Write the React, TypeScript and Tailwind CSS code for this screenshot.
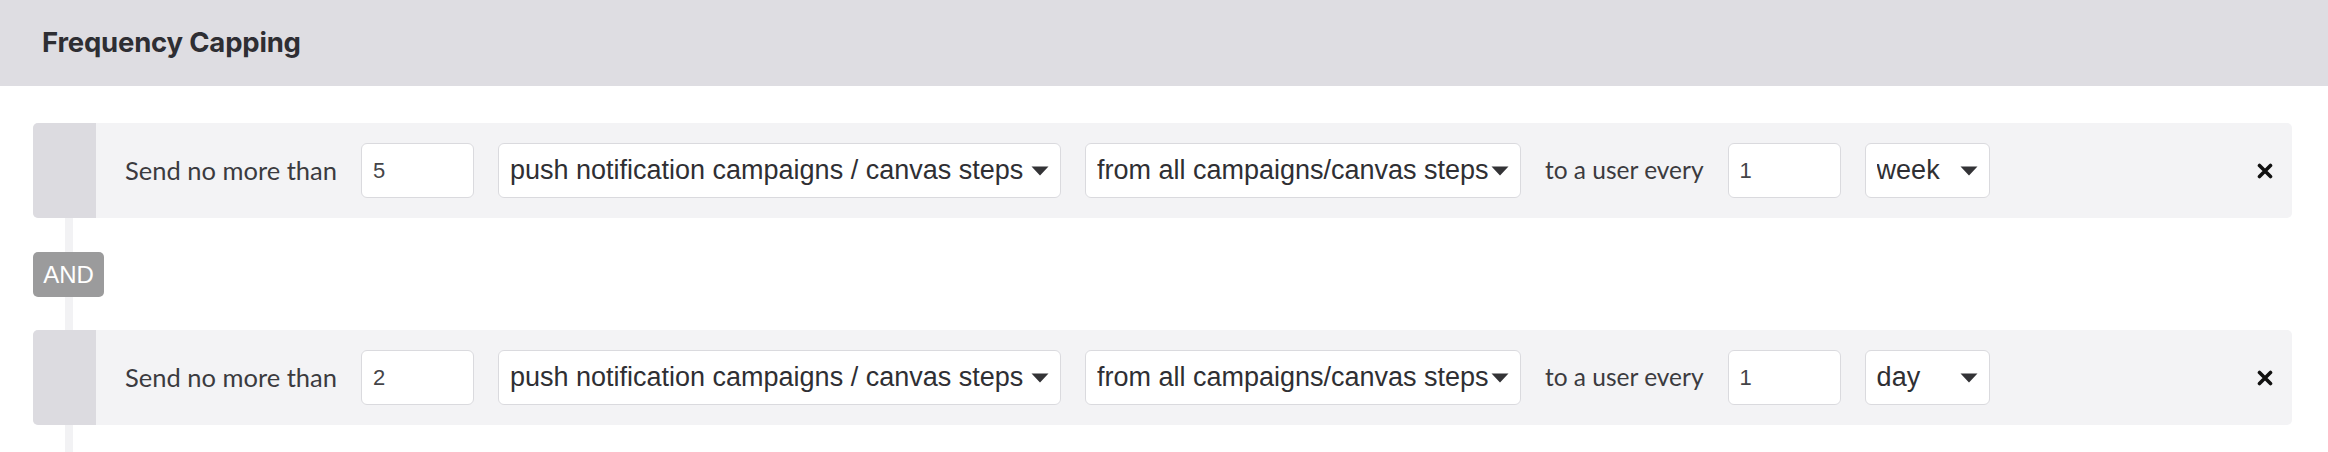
import React from "react";

interface Rule {
  id: string;
  count: string;
  type: string;
  scope: string;
  every: string;
  unit: string;
}

const rules: Rule[] = [
  {
    id: "r1",
    count: "5",
    type: "push notification campaigns / canvas steps",
    scope: "from all campaigns/canvas steps",
    every: "1",
    unit: "week",
  },
  {
    id: "r2",
    count: "2",
    type: "push notification campaigns / canvas steps",
    scope: "from all campaigns/canvas steps",
    every: "1",
    unit: "day",
  },
];

function Caret() {
  return (
    <svg width="18" height="10" viewBox="0 0 18 10" className="absolute right-[11px] top-1/2 -translate-y-1/2">
      <path d="M0.5 0.5 L17.5 0.5 L9 9.5 Z" fill="#333336" />
    </svg>
  );
}

function SelectBox({ value, width }: { value: string; width: string }) {
  return (
    <div
      className={`${width} relative h-[55px] shrink-0 flex items-center pl-[11px] pr-[8px] bg-white border border-[#dadade] rounded-[6px] text-[27px] text-[#2f2f33] font-['Liberation_Sans',Arial,sans-serif]`}
    >
      <span className="flex-1 overflow-hidden whitespace-nowrap">{value}</span>
      <Caret />
    </div>
  );
}

function NumberBox({ value }: { value: string }) {
  return (
    <div className="w-[113px] h-[55px] shrink-0 flex items-center pl-[11px] bg-white border border-[#dadade] rounded-[6px] text-[22px] text-[#444448] font-['Liberation_Sans',Arial,sans-serif]">
      {value}
    </div>
  );
}

function RuleRow({ rule }: { rule: Rule }) {
  return (
    <div className="flex h-[95px] rounded-[5px] overflow-hidden bg-[#f3f3f5]">
      <div className="w-[63px] shrink-0 bg-[#dcdbe0]" />
      <div className="flex-1 flex items-center gap-6 pl-[29px] pr-[19px] text-[24.5px] text-[#3b3b3f]">
        <span className="whitespace-nowrap text-[25.5px]">Send no more than</span>
        <NumberBox value={rule.count} />
        <SelectBox value={rule.type} width="w-[563px]" />
        <SelectBox value={rule.scope} width="w-[436px]" />
        <span className="whitespace-nowrap">to a user every</span>
        <NumberBox value={rule.every} />
        <SelectBox value={rule.unit} width="w-[125px]" />
        <button className="ml-auto w-[16px] h-[16px] flex items-center justify-center">
          <svg width="16" height="16" viewBox="0 0 16 16">
            <path d="M2.5 2.5 L13.5 13.5 M13.5 2.5 L2.5 13.5" stroke="#111" strokeWidth="3.6" strokeLinecap="round" />
          </svg>
        </button>
      </div>
    </div>
  );
}

export default function App() {
  return (
    <div className="h-[452px] overflow-hidden bg-white font-['Lato',sans-serif]">
      <div className="h-[86px] bg-[#dedde2] flex items-center px-[42px]">
        <h2 className="text-[27.5px] font-bold text-[#2e2e33] font-['Inter',sans-serif] tracking-[-0.2px]">
          Frequency Capping
        </h2>
      </div>

      <div className="pl-[33px] pr-[36px] pt-[37px]">
        <RuleRow rule={rules[0]} />
        <div className="h-[34px] ml-[32px] w-[8px] bg-[#f2f2f4]" />
        <div className="w-[71px] h-[45px] rounded-[5px] bg-[#9b9b9c] flex items-center justify-center text-white text-[24px] font-['Liberation_Sans',Arial,sans-serif]">
          AND
        </div>
        <div className="h-[33px] ml-[32px] w-[8px] bg-[#f2f2f4]" />
        <RuleRow rule={rules[1]} />
        <div className="h-[60px] ml-[32px] w-[8px] bg-[#f2f2f4]" />
      </div>
    </div>
  );
}
